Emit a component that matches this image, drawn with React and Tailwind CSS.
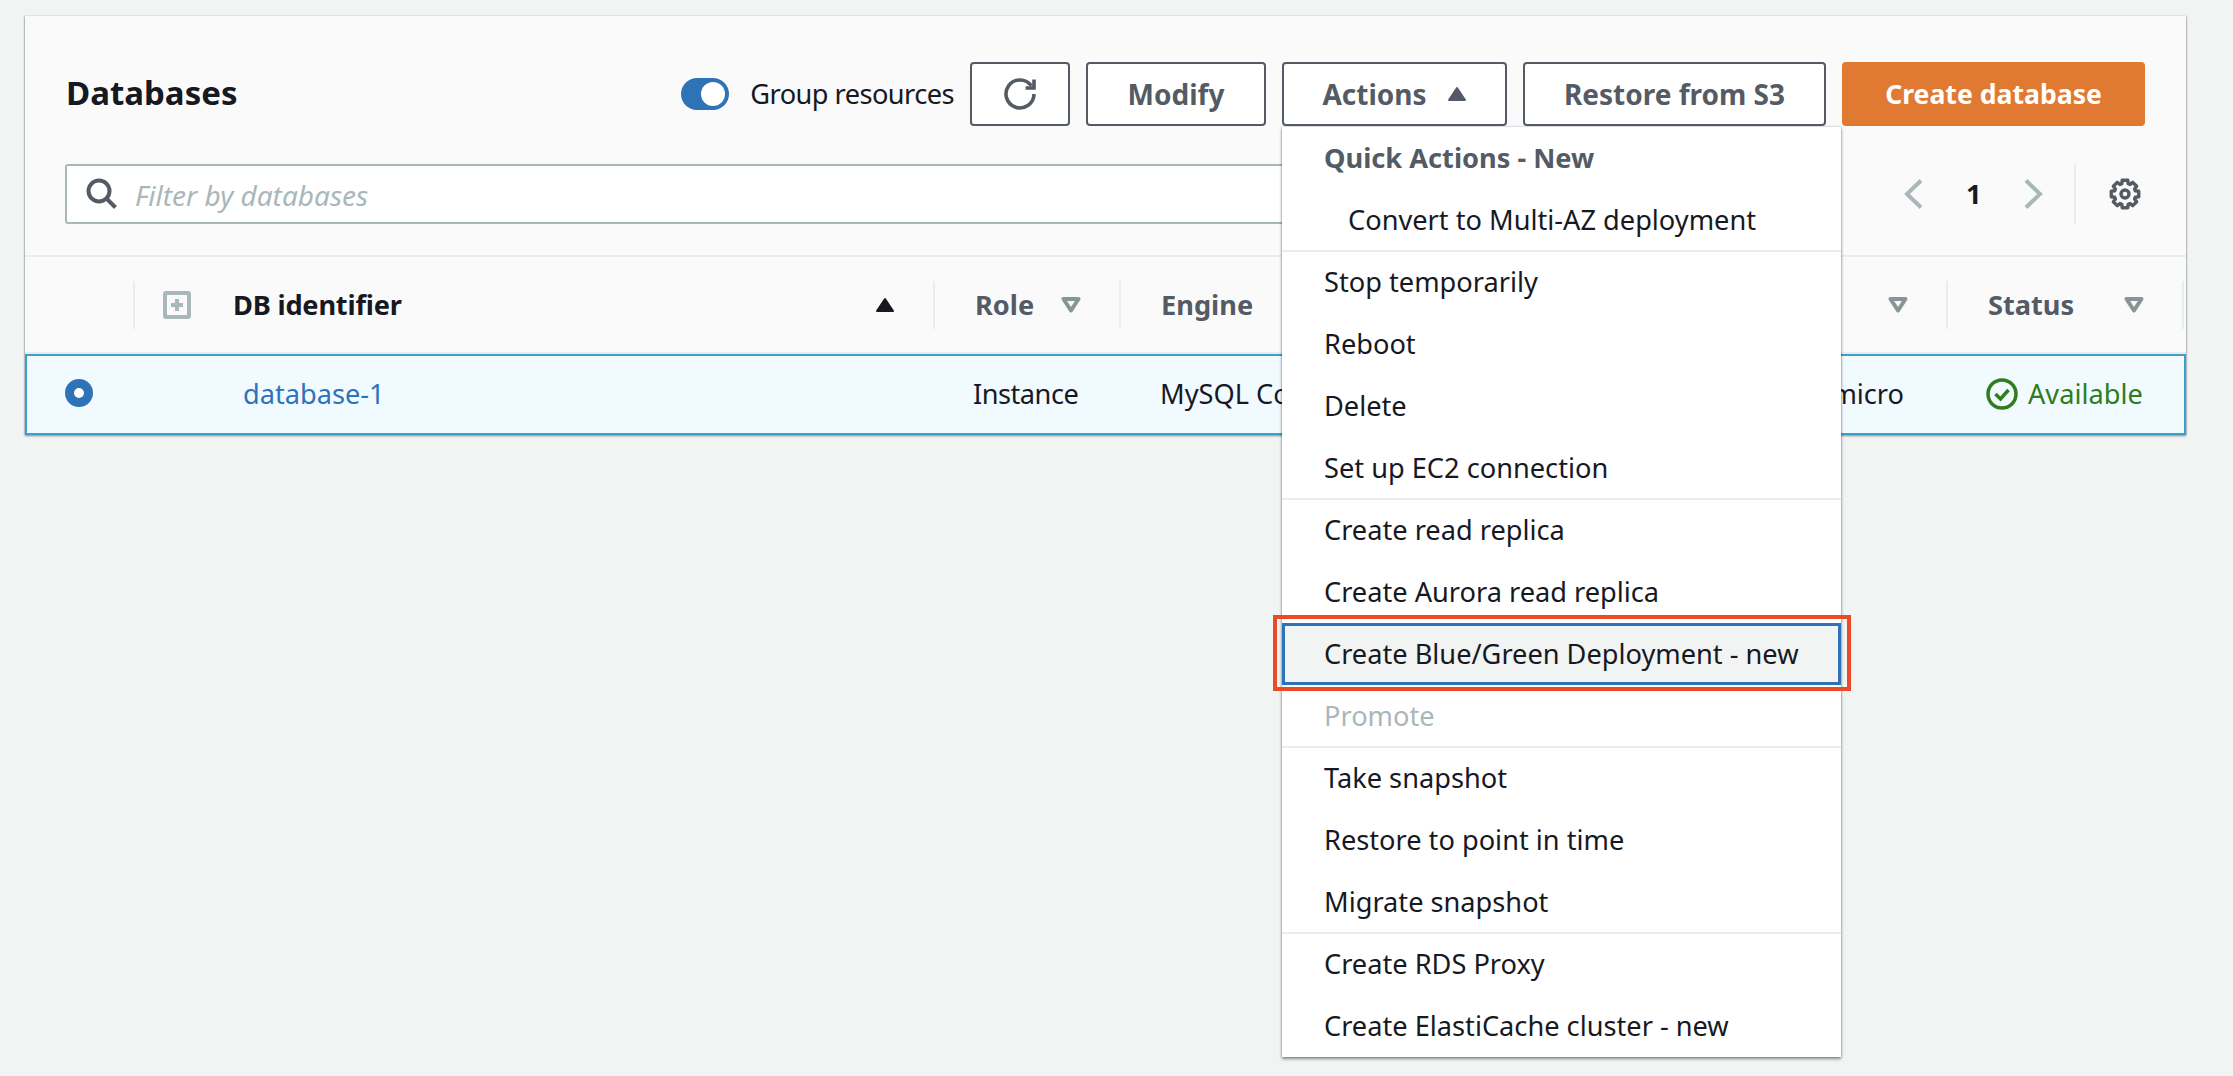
import { Fragment } from 'react';

const menuGroups = [
  [
    { label: 'Quick Actions - New', heading: true },
    { label: 'Convert to Multi-AZ deployment', indent: true },
  ],
  [
    { label: 'Stop temporarily' },
    { label: 'Reboot' },
    { label: 'Delete' },
    { label: 'Set up EC2 connection' },
  ],
  [
    { label: 'Create read replica' },
    { label: 'Create Aurora read replica' },
    { label: 'Create Blue/Green Deployment - new', focused: true },
    { label: 'Promote', disabled: true },
  ],
  [
    { label: 'Take snapshot' },
    { label: 'Restore to point in time' },
    { label: 'Migrate snapshot' },
  ],
  [
    { label: 'Create RDS Proxy' },
    { label: 'Create ElastiCache cluster - new' },
  ],
];

// 8 square teeth around a ring, worked out once
const gearPath = Array.from({ length: 8 }, (_, i) => {
  const a = (i * Math.PI) / 4;
  const pt = (r, d) => {
    const x = 16 + r * Math.cos(a + d);
    const y = 16 + r * Math.sin(a + d);
    return `${x.toFixed(2)} ${y.toFixed(2)}`;
  };
  return `${i === 0 ? 'M' : 'L'}${pt(10.8, -0.3)} L${pt(14, -0.2)} L${pt(14, 0.2)} L${pt(10.8, 0.3)}`;
}).join(' ') + 'Z';

function Caret({ up, filled, className }) {
  return (
    <svg viewBox="0 0 20 16" className={className}>
      {filled ? (
        <path d={up ? 'M10 2 18 14H2Z' : 'M10 14 2 2H18Z'} fill="currentColor" stroke="currentColor" strokeWidth="2" strokeLinejoin="round" />
      ) : (
        <path d="M10 13.5 2.5 2H17.5Z" fill="none" stroke="currentColor" strokeWidth="4" strokeLinejoin="round" />
      )}
    </svg>
  );
}

function OutlineButton({ className, children }) {
  return (
    <button className={`flex h-16 items-center justify-center rounded-[4px] border-2 border-[#545b64] bg-white text-[28px] font-bold text-[#545b64] ${className}`}>
      {children}
    </button>
  );
}

function HeaderCell({ width, label, sort, children }) {
  return (
    <div className={`flex h-12 shrink-0 items-center justify-between border-l-2 border-[#eaeded] pl-[40px] pr-[38px] ${width}`}>
      {children}
      {label && <span className="font-bold text-[#545b64]">{label}</span>}
      {sort === 'up' && <Caret up filled className="h-4 w-5 text-[#16191f]" />}
      {sort === 'filter' && <Caret className="ml-auto h-4 w-5 text-[#879596]" />}
    </div>
  );
}

function MenuItem({ item, first }) {
  let tone = 'text-[#16191f]';
  if (item.heading) tone = 'font-bold text-[#545b64]';
  if (item.disabled) tone = 'text-[#aab7b8]';
  if (item.focused) {
    return (
      <div className="relative flex h-[62px] items-center whitespace-nowrap border-[3px] border-[#2e73b8] bg-[#f2f3f3] pl-[39px] text-[#16191f]">
        {item.label}
        <div className="absolute -bottom-[9px] -left-[12px] -right-[13px] -top-[11px] border-[4px] border-[#ea4a28]" />
      </div>
    );
  }
  return (
    <div className={`flex items-center whitespace-nowrap ${first ? '-mt-px h-[63px] border-t-2 border-[#eaeded] pb-px' : 'h-[62px]'} ${item.indent ? 'pl-[66px]' : 'pl-[42px]'} ${tone}`}>
      {item.label}
    </div>
  );
}

function ActionsMenu() {
  return (
    <div className="absolute left-0 top-full z-10 mt-px w-[559px] bg-white shadow-[0_2px_3px_rgba(0,28,36,0.45),0_0_2px_rgba(0,28,36,0.3)]">
      {menuGroups.map((group, i) => (
        <Fragment key={i}>
          {group.map((item, j) => (
            <MenuItem key={item.label} item={item} first={i > 0 && j === 0} />
          ))}
        </Fragment>
      ))}
    </div>
  );
}

export default function App() {
  return (
    <div className="min-h-screen bg-[#f2f3f3] pl-[25px] pr-[47px] pt-4 font-['Noto_Sans',sans-serif] text-[27.2px] leading-10 text-[#16191f]">
      <div className="bg-[#fafafa] shadow-[0_1px_2px_rgba(0,28,36,0.45),1px_0_1px_rgba(0,28,36,0.12),-1px_0_1px_rgba(0,28,36,0.12)]">
        <div className="px-[41px] pb-[31px] pt-[46px]">
          <div className="flex items-center justify-between">
            <h1 className="-mt-[2px] text-[33px] font-bold">Databases</h1>
            <div className="flex items-center gap-4">
              <div className="flex items-center gap-[21px]">
                <div className="flex h-8 w-12 items-center justify-end rounded-full bg-[#2e73b8] pr-1">
                  <div className="h-6 w-6 rounded-full bg-white" />
                </div>
                <span className="tracking-[-0.55px]">Group resources</span>
              </div>
              <OutlineButton className="w-[100px]">
                <svg viewBox="0 0 16 16" fill="none" stroke="currentColor" strokeWidth="1.8" className="h-8 w-8">
                  <path d="M15 8a7 7 0 1 1-1.3-4.1" />
                  <path d="M15 .8V5h-4.2" />
                </svg>
              </OutlineButton>
              <OutlineButton className="w-[180px]">Modify</OutlineButton>
              <div className="relative">
                <OutlineButton className="w-[225px] gap-5">
                  Actions
                  <Caret up filled className="h-4 w-5" />
                </OutlineButton>
                <ActionsMenu />
              </div>
              <OutlineButton className="w-[303px]">Restore from S3</OutlineButton>
              <button className="flex h-16 w-[303px] items-center justify-center rounded-[4px] bg-[#e07a33] text-[26.6px] font-bold text-white">
                Create database
              </button>
            </div>
          </div>
          <div className="mt-[38px] flex items-center">
            <div className="-ml-px flex h-[60px] w-[1440px] items-center gap-[17px] rounded-[3px] border-2 border-[#aab7b8] bg-white pl-[19px]">
              <svg viewBox="0 0 32 32" fill="none" stroke="#545b64" strokeWidth="4" className="h-8 w-8 shrink-0">
                <circle cx="13" cy="13" r="10.5" />
                <path d="m20.5 20.5 9 9" />
              </svg>
              <input readOnly placeholder="Filter by databases" className="mt-[2px] w-full bg-transparent text-[28px] italic outline-none placeholder:text-[#aab7b8]" />
            </div>
            <div className="ml-auto flex items-center">
              <svg viewBox="0 0 19 30" fill="none" stroke="#aab7b8" strokeWidth="4" className="h-[30px] w-[19px]">
                <path d="M17 1.5 3 15l14 13.5" />
              </svg>
              <span className="ml-[43px] w-[12px] font-bold leading-10">1</span>
              <svg viewBox="0 0 19 30" fill="none" stroke="#aab7b8" strokeWidth="4" className="ml-[46px] h-[30px] w-[19px]">
                <path d="M2 1.5 16 15 2 28.5" />
              </svg>
              <div className="ml-[31px] h-[60px] w-[2px] bg-[#eaeded]" />
              <svg viewBox="0 0 32 32" fill="none" stroke="#545b64" className="ml-[33px] mr-[4px] h-8 w-8">
                <path d={gearPath} strokeWidth="3.4" strokeLinejoin="round" />
                <circle cx="16" cy="16" r="4" strokeWidth="3.4" />
              </svg>
            </div>
          </div>
        </div>
        <div className="flex h-[99px] items-center border-y-2 border-[#eaeded]">
          <div className="w-[108px] shrink-0" />
          <HeaderCell width="w-[800px]" sort="up">
            <div className="-ml-3 flex items-center gap-[42px]">
              <svg viewBox="0 0 28 28" className="h-7 w-7">
                <rect x="2" y="2" width="24" height="24" rx="1" fill="none" stroke="#aab7b8" strokeWidth="4" />
                <path d="M14 8v12M8 14h12" stroke="#aab7b8" strokeWidth="4" />
              </svg>
              <span className="font-bold tracking-[-0.2px]">DB identifier</span>
            </div>
          </HeaderCell>
          <HeaderCell width="w-[186px]" label="Role" sort="filter" />
          <HeaderCell width="w-[300px]" label="Engine" />
          <HeaderCell width="w-[221px]" />
          <HeaderCell width="w-[306px]" sort="filter" />
          <HeaderCell width="w-[236px]" label="Status" sort="filter" />
          <div className="h-12 w-[3px] border-l-2 border-[#eaeded]" />
        </div>
        <div className="flex h-[81px] items-center whitespace-nowrap border-2 border-[#3f9fc9] bg-[#f1faff] pb-[2px]">
          <div className="w-[107px] shrink-0 pl-[38px]">
            <div className="-mt-[2px] h-7 w-7 rounded-full border-[9px] border-[#2e73b8] bg-white" />
          </div>
          <div className="w-[800px] shrink-0 pl-[109px] text-[#2e73b8]">database-1</div>
          <div className="w-[185px] shrink-0 pl-[39px] tracking-[-0.5px]">Instance</div>
          <div className="w-[300px] shrink-0 pl-[41px]">MySQL Community</div>
          <div className="w-[221px] shrink-0" />
          <div className="w-[307px] shrink-0 pr-[43px] text-right">db.t3.micro</div>
          <div className="flex shrink-0 items-center gap-[10px] pl-[39px] text-[#2f7d1c]">
            <svg viewBox="0 0 32 32" fill="none" stroke="currentColor" strokeWidth="3.5" className="h-8 w-8">
              <circle cx="16" cy="16" r="14" />
              <path d="m9.5 16 5 5 8-9" />
            </svg>
            Available
          </div>
        </div>
      </div>
    </div>
  );
}
